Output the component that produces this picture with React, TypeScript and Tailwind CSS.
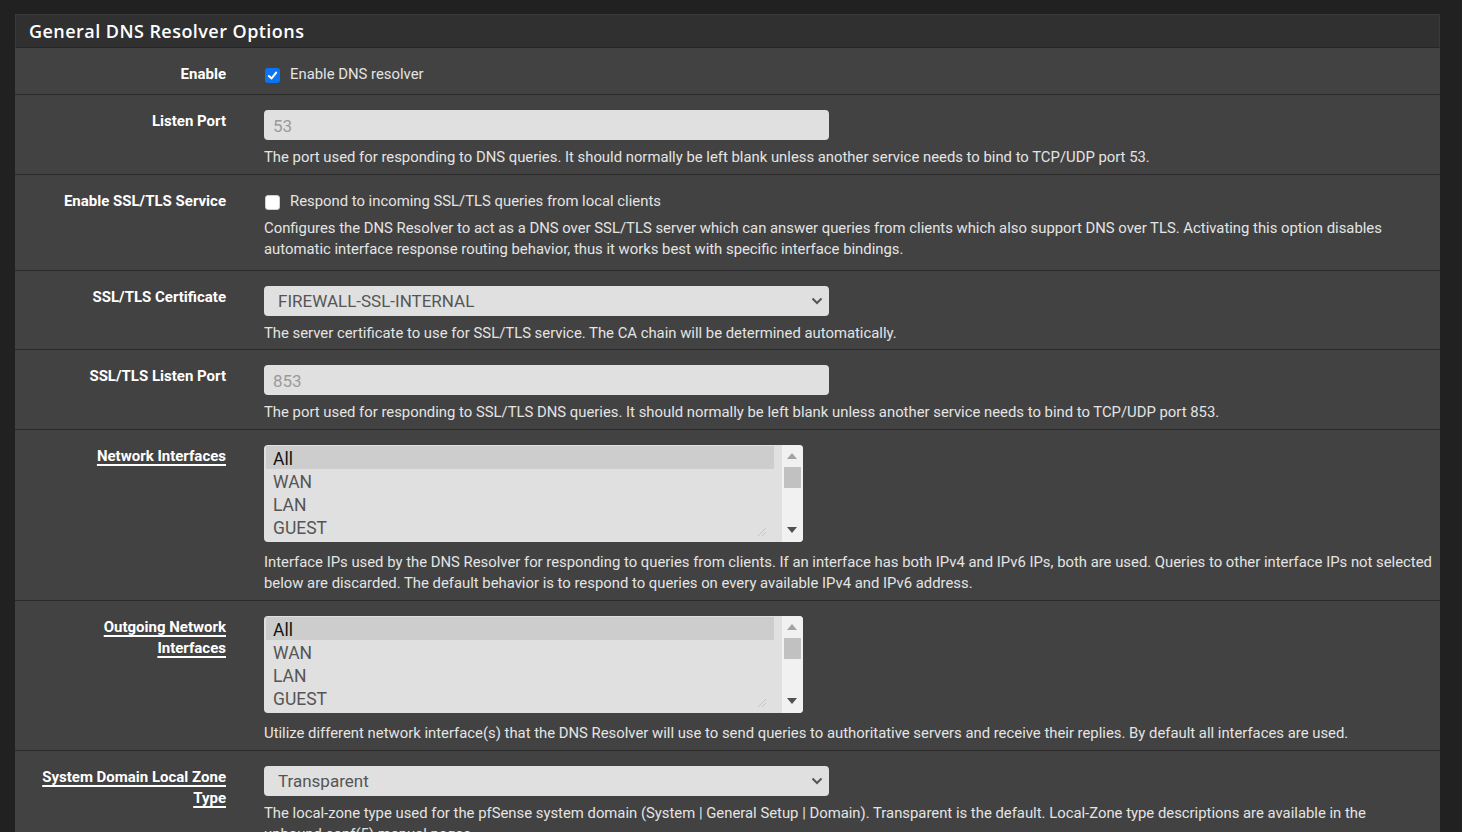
import React from "react";

const body = { fontFamily: "Roboto, 'Liberation Sans', sans-serif" };
const head = { fontFamily: "'Open Sans', 'Noto Sans', sans-serif" };

function Label({ children, link }: { children: React.ReactNode; link?: boolean }) {
  return (
    <div className="w-[211px] shrink-0 pt-[16px] text-right text-[15px] font-bold leading-[21px] text-white">
      {link ? <span className="underline decoration-[1.5px] underline-offset-[3px]">{children}</span> : children}
    </div>
  );
}

function Row({ label, link, children, pb }: { label: React.ReactNode; link?: boolean; children: React.ReactNode; pb?: string }) {
  return (
    <div className="flex border-b border-[#2a2a2a] bg-[#424242]">
      <Label link={link}>{label}</Label>
      <div className={"ml-[38px] min-w-0 flex-1 pr-[5px] pt-[15px] " + (pb ?? "pb-[6px]")}>{children}</div>
    </div>
  );
}

function Help({ lines }: { lines: string[] }) {
  return (
    <div className="pt-[7px] text-[14.85px] leading-[21px] text-[#e4e4e4]">
      {lines.map((l, i) => (
        <div key={i} className="whitespace-nowrap">
          {l}
        </div>
      ))}
    </div>
  );
}

function Check({ checked, label }: { checked?: boolean; label: string }) {
  return (
    <div className="flex h-[21px] items-center pt-[1px]">
      {checked ? (
        <div className="ml-[1px] mt-[2px] flex h-[15px] w-[15px] items-center justify-center rounded-[3px] bg-[#0b74f5]">
          <svg width="11" height="11" viewBox="0 0 12 12">
            <polyline points="2,6.5 5,9.2 10,2.8" fill="none" stroke="white" strokeWidth="2.2" strokeLinecap="round" strokeLinejoin="round" />
          </svg>
        </div>
      ) : (
        <div className="ml-[1px] mt-[2px] h-[15px] w-[15px] rounded-[3px] border border-[#d0d0d0] bg-white" />
      )}
      <span className="ml-[10px] text-[14.85px] text-[#e4e4e4]">{label}</span>
    </div>
  );
}

function TextInput({ placeholder }: { placeholder: string }) {
  return (
    <div className="flex h-[30px] w-[565px] items-center rounded-[4px] bg-[#e0e0e0] pl-[9px] pt-[3px] text-[17px] text-[#9a9a9a]">
      {placeholder}
    </div>
  );
}

function Select({ value }: { value: string }) {
  return (
    <div className="flex h-[30px] w-[565px] items-center justify-between rounded-[4px] bg-[#e0e0e0] pl-[14px] pr-[6px] text-[17px] text-[#555]">
      <span className="pt-[2px]">{value}</span>
      <svg width="12" height="8" viewBox="0 0 12 8">
        <polyline points="1.5,1.5 6,6 10.5,1.5" fill="none" stroke="#555" strokeWidth="2" />
      </svg>
    </div>
  );
}

function ListBox() {
  const items = ["All", "WAN", "LAN", "GUEST"];
  return (
    <div className="relative flex h-[97px] w-[539px] overflow-hidden rounded-[4px] bg-[#e0e0e0]">
      <div className="flex-1 pl-[2px] pr-[8px] pt-[1px]">
        {items.map((it, i) => (
          <div
            key={it}
            className={
              i === 0
                ? "h-[23px] bg-[#cdcdcd] pl-[7px] pt-[3px] text-[17.5px] leading-[20px] text-[#111]"
                : "h-[23px] pl-[7px] pt-[3px] text-[17.5px] leading-[20px] text-[#555]"
            }
          >
            {it}
          </div>
        ))}
      </div>
      <div className="absolute bottom-[5px] right-[36px]">
        <svg width="10" height="10" viewBox="0 0 10 10">
          <line x1="9" y1="1" x2="1" y2="9" stroke="#c4c4c4" strokeWidth="1" />
          <line x1="9" y1="5" x2="5" y2="9" stroke="#c4c4c4" strokeWidth="1" />
        </svg>
      </div>
      <div className="relative w-[21px] shrink-0 bg-[#f1f1f1]">
        <svg className="absolute left-[5px] top-[8px]" width="10" height="6" viewBox="0 0 10 6">
          <polygon points="0,6 10,6 5,0" fill="#a3a3a3" />
        </svg>
        <div className="absolute left-[2px] top-[22px] h-[21px] w-[17px] bg-[#c1c1c1]" />
        <svg className="absolute bottom-[9px] left-[5px]" width="10" height="6" viewBox="0 0 10 6">
          <polygon points="0,0 10,0 5,6" fill="#505050" />
        </svg>
      </div>
    </div>
  );
}

export default function App() {
  return (
    <div className="h-[832px] overflow-hidden bg-[#212121] pl-[15px] pr-[22px] pt-[14px]" style={body}>
      <div>
        <div className="flex h-[34px] items-center border border-[#3a3a3a] border-b-[#262626] bg-[#303030] pl-[13px]">
          <span className="text-[18px] font-semibold tracking-[0.45px] text-white" style={head}>
            General DNS Resolver Options
          </span>
        </div>
        <div className="flex border-b border-[#2a2a2a] bg-[#424242]">
          <Label>Enable</Label>
          <div className="ml-[38px] flex-1 pb-[10px] pt-[15px]">
            <Check checked label="Enable DNS resolver" />
          </div>
        </div>
        <Row label="Listen Port">
          <TextInput placeholder="53" />
          <Help lines={["The port used for responding to DNS queries. It should normally be left blank unless another service needs to bind to TCP/UDP port 53."]} />
        </Row>
        <Row label="Enable SSL/TLS Service">
          <Check label="Respond to incoming SSL/TLS queries from local clients" />
          <div className="pb-[4px]">
            <Help
              lines={[
                "Configures the DNS Resolver to act as a DNS over SSL/TLS server which can answer queries from clients which also support DNS over TLS. Activating this option disables",
                "automatic interface response routing behavior, thus it works best with specific interface bindings.",
              ]}
            />
          </div>
        </Row>
        <Row label="SSL/TLS Certificate" pb="pb-[5px]">
          <Select value="FIREWALL-SSL-INTERNAL" />
          <Help lines={["The server certificate to use for SSL/TLS service. The CA chain will be determined automatically."]} />
        </Row>
        <Row label="SSL/TLS Listen Port">
          <TextInput placeholder="853" />
          <Help lines={["The port used for responding to SSL/TLS DNS queries. It should normally be left blank unless another service needs to bind to TCP/UDP port 853."]} />
        </Row>
        <Row label="Network Interfaces" link>
          <ListBox />
          <div className="pt-[3px]">
            <Help
              lines={[
                "Interface IPs used by the DNS Resolver for responding to queries from clients. If an interface has both IPv4 and IPv6 IPs, both are used. Queries to other interface IPs not selected",
                "below are discarded. The default behavior is to respond to queries on every available IPv4 and IPv6 address.",
              ]}
            />
          </div>
        </Row>
        <Row
          link
          label={
            <>
              Outgoing Network
              <br />
              Interfaces
            </>
          }
        >
          <ListBox />
          <div className="pt-[3px]">
            <Help lines={["Utilize different network interface(s) that the DNS Resolver will use to send queries to authoritative servers and receive their replies. By default all interfaces are used."]} />
          </div>
        </Row>
        <Row
          link
          label={
            <>
              System Domain Local Zone
              <br />
              Type
            </>
          }
        >
          <Select value="Transparent" />
          <Help
            lines={[
              "The local-zone type used for the pfSense system domain (System | General Setup | Domain). Transparent is the default. Local-Zone type descriptions are available in the",
              "unbound.conf(5) manual pages.",
            ]}
          />
        </Row>
      </div>
    </div>
  );
}
